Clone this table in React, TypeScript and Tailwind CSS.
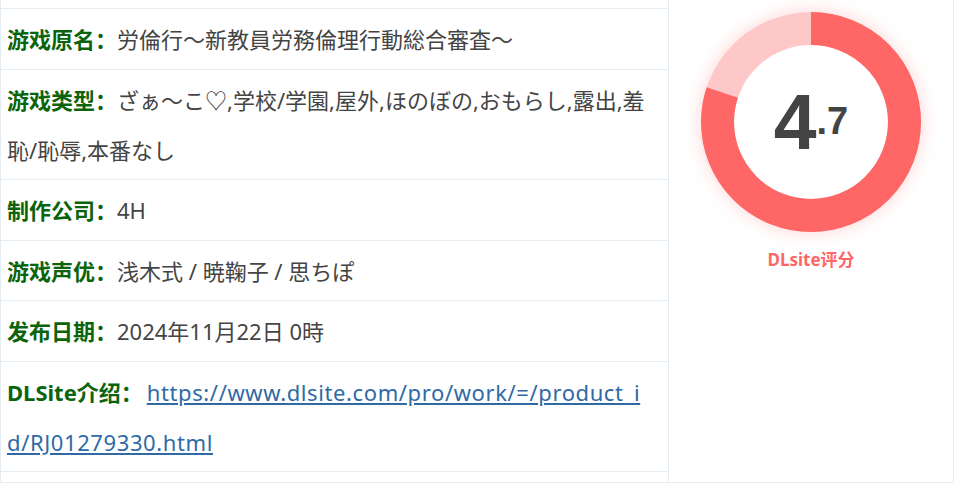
import React from "react";

const rows: { label: string; value: React.ReactNode }[] = [
  { label: "游戏原名：", value: "労倫行～新教員労務倫理行動総合審査～" },
  {
    label: "游戏类型：",
    value: "ざぁ～こ♡,学校/学園,屋外,ほのぼの,おもらし,露出,羞恥/恥辱,本番なし",
  },
  { label: "制作公司：", value: "4H" },
  { label: "游戏声优：", value: "浅木式 / 暁鞠子 / 思ちぽ" },
  { label: "发布日期：", value: "2024年11月22日 0時" },
  {
    label: "DLSite介绍：",
    value: (
      <a
        href="#"
        className="ml-1 break-all tracking-[0.6px] text-[#2f6aa6] underline underline-offset-2"
      >
        https://www.dlsite.com/pro/work/=/product_id/RJ01279330.html
      </a>
    ),
  },
];

function ScoreRing() {
  const r = 93.5;
  const c = 2 * Math.PI * r;
  const part = 0.8;
  return (
    <div className="relative h-[220px] w-[220px] rounded-full shadow-[0_0_18px_rgba(255,102,102,0.28)]">
      <svg width="220" height="220" viewBox="0 0 220 220" className="absolute inset-0">
        <circle cx="110" cy="110" r={r} fill="none" stroke="#ffc8c8" strokeWidth="33" />
        <circle
          cx="110"
          cy="110"
          r={r}
          fill="none"
          stroke="#ff6666"
          strokeWidth="33"
          strokeDasharray={`${c * part} ${c}`}
          transform="rotate(-90 110 110)"
        />
      </svg>
      <div className="absolute inset-0 flex items-center justify-center font-['Liberation_Sans',Arial,sans-serif] font-bold text-[#444]">
        <span className="text-[77px] leading-none">4</span>
        <span className="-mt-[2px] text-[38px] leading-none">.7</span>
      </div>
    </div>
  );
}

export default function App() {
  return (
    <div className="min-h-screen bg-white font-['Noto_Sans','Noto_Sans_CJK_SC',sans-serif]">
      <div className="flex w-[954px] border-b border-l border-r border-[#e3ebf3]">
        <div className="flex w-[667px] flex-col pb-[10px]">
          <div className="h-[9px] border-b border-[#e3ebf3]" />
          {rows.map((row) => (
            <div
              key={row.label}
              className="border-b border-[#e3ebf3] px-[6px] pb-[4.5px] pt-[5px] text-[22px] leading-[50px] text-[#444]"
            >
              <span className="font-bold text-[#0b640b]">{row.label}</span>
              {row.value}
            </div>
          ))}
        </div>
        <div className="flex flex-1 flex-col items-center border-l border-[#e3ebf3] pt-[12px]">
          <ScoreRing />
          <div className="mt-[15px] text-[17px] font-bold text-[#ff6666]">DLsite评分</div>
        </div>
      </div>
    </div>
  );
}
